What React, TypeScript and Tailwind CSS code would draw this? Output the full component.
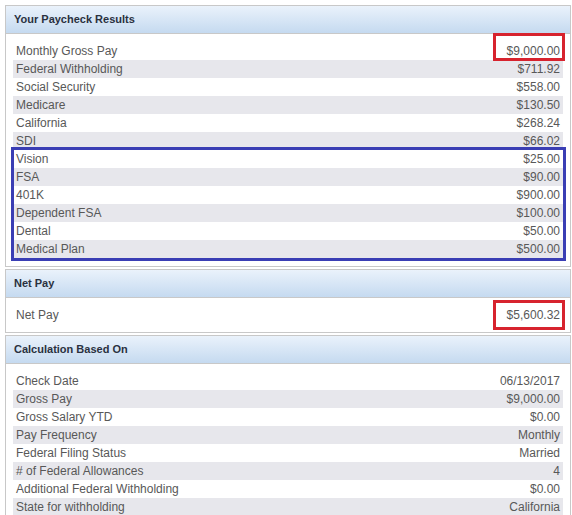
import React from "react";

type Row = [string, string];

const paycheck: Row[] = [
  ["Monthly Gross Pay", "$9,000.00"],
  ["Federal Withholding", "$711.92"],
  ["Social Security", "$558.00"],
  ["Medicare", "$130.50"],
  ["California", "$268.24"],
  ["SDI", "$66.02"],
];
const deductions: Row[] = [
  ["Vision", "$25.00"],
  ["FSA", "$90.00"],
  ["401K", "$900.00"],
  ["Dependent FSA", "$100.00"],
  ["Dental", "$50.00"],
  ["Medical Plan", "$500.00"],
];
const calc: Row[] = [
  ["Check Date", "06/13/2017"],
  ["Gross Pay", "$9,000.00"],
  ["Gross Salary YTD", "$0.00"],
  ["Pay Frequency", "Monthly"],
  ["Federal Filing Status", "Married"],
  ["# of Federal Allowances", "4"],
  ["Additional Federal Withholding", "$0.00"],
  ["State for withholding", "California"],
];

function Rows({ rows, start = 0 }: { rows: Row[]; start?: number }) {
  return (
    <>
      {rows.map(([k, v], i) => (
        <div
          key={k}
          className={`flex h-[18px] items-center justify-between px-[3px] text-[12px] text-[#585858] ${
            (i + start) % 2 === 1 ? "bg-[#e7e7ec]" : "bg-white"
          }`}
        >
          <span>{k}</span>
          <span>{v}</span>
        </div>
      ))}
    </>
  );
}

function Header({ title }: { title: string }) {
  return (
    <div className="flex h-[28px] items-center border-b border-[#c8c8c8] bg-gradient-to-b from-[#eaf2fb] to-[#c5daf0] px-[8px] text-[11px] font-bold text-[#2a3140]">
      {title}
    </div>
  );
}

export default function App() {
  return (
    <div className="h-[515px] w-[572px] overflow-hidden bg-white pt-[5px] font-['Liberation_Sans',Arial,sans-serif]">
      <div className="ml-[5px] w-[566px]">
        <div className="relative border border-[#c8c8c8]">
          <Header title="Your Paycheck Results" />
          <div className="px-[7px] pb-[8px] pt-[8px]">
            <Rows rows={paycheck} />
            <Rows rows={deductions} />
          </div>
          <div className="pointer-events-none absolute left-[5px] top-[141px] h-[114px] w-[555px] border-[3px] border-[#3a3eb4]" />
          <div className="pointer-events-none absolute left-[487px] top-[27px] h-[28px] w-[72px] border-[3px] border-[#d7232e]" />
        </div>

        <div className="relative mt-[2px] border border-[#c8c8c8]">
          <Header title="Net Pay" />
          <div className="px-[7px] pb-[8px] pt-[8px]">
            <div className="flex h-[18px] items-center justify-between px-[3px] text-[12px] text-[#585858]">
              <span>Net Pay</span>
              <span>$5,600.32</span>
            </div>
          </div>
          <div className="pointer-events-none absolute left-[487px] top-[30px] h-[30px] w-[72px] border-[3px] border-[#d7232e]" />
        </div>

        <div className="mt-[2px] border border-[#c8c8c8]">
          <Header title="Calculation Based On" />
          <div className="px-[7px] pt-[8px]">
            <Rows rows={calc} />
          </div>
        </div>
      </div>
    </div>
  );
}
